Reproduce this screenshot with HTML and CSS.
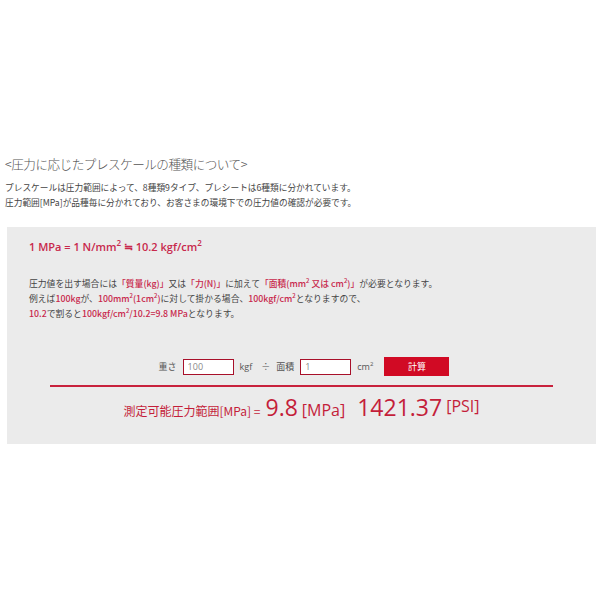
FILE: index.html
```html
<!DOCTYPE html>
<html>
<head>
    <meta charset="utf-8">
    <title>プレスケールの種類について</title>
    <link rel="stylesheet" href="styles.css">
</head>
<body>
    <div class="section">
        <h2 class="title">&lt;圧力に応じたプレスケールの種類について&gt;</h2>
        <p class="lead">プレスケールは圧力範囲によって、8種類9タイプ、プレシートは6種類に分かれています。<br>
        圧力範囲[MPa]が品種毎に分かれており、お客さまの環境下での圧力値の確認が必要です。</p>

        <div class="calc-box">
            <p class="formula">1 MPa = 1 N/mm<sup>2</sup> ≒ 10.2 kgf/cm<sup>2</sup></p>
            <p class="note">
                圧力値を出す場合には<span class="hl">「質量(kg)」</span>又は<span class="hl">「力(N)」</span>に加えて<span class="hl">「面積(mm<sup>2</sup> 又は cm<sup>2</sup>)」</span>が必要となります。<br>
                例えば<span class="hl">100kg</span>が、<span class="hl">100mm<sup>2</sup>(1cm<sup>2</sup>)</span>に対して掛かる場合、<span class="hl">100kgf/cm<sup>2</sup></span>となりますので、<br>
                <span class="hl">10.2</span>で割ると<span class="hl">100kgf/cm<sup>2</sup>/10.2=9.8 MPa</span>となります。
            </p>

            <div class="calc-form">
                <label>重さ</label>
                <input type="text" id="weight" value="100">
                <span class="unit">kgf</span>
                <span class="op">÷</span>
                <label>面積</label>
                <input type="text" id="area" value="1">
                <span class="unit">cm<sup>2</sup></span>
                <button onclick="calc()">計算</button>
            </div>

            <div class="result">
                <span class="result-label">測定可能圧力範囲[MPa] =</span>
                <span class="big" id="mpa">9.8</span>
                <span class="bracket">[MPa]</span>
                <span class="big psi" id="psi">1421.37</span>
                <span class="bracket raised">[PSI]</span>
            </div>
        </div>
    </div>

<script>
    function calc() {
        const w = parseFloat(document.getElementById("weight").value);
        const a = parseFloat(document.getElementById("area").value);
        if (!w || !a) return;
        const mpa = (w / a) / 10.2;
        document.getElementById("mpa").innerText = mpa.toFixed(1);
        document.getElementById("psi").innerText = (mpa * 145.038).toFixed(2);
    }
</script>
</body>
</html>
```

FILE: styles.css
```css
body {
    margin: 0;
    padding: 0;
    background: #fff;
    color: #444;
    font-family: "Noto Sans CJK JP", "Open Sans", sans-serif;
}
.section {
    padding: 154px 4px 0 5px;
}
.title {
    margin: 0;
    font-size: 12.6px;
    font-weight: 300;
    line-height: 19px;
    color: #555;
    letter-spacing: -0.5px;
}
.lead {
    margin: 7px 0 0;
    font-size: 8.7px;
    line-height: 15px;
    color: #444;
}
.calc-box {
    margin: 17px 0 0 2px;
    width: 589px;
    height: 217px;
    box-sizing: border-box;
    background: #ebebeb;
    padding-top: 12px;
}
.formula {
    margin: 0;
    padding-left: 22px;
    font-family: "Open Sans", sans-serif;
    font-size: 11px;
    font-weight: 600;
    line-height: 16px;
    color: #c8284c;
}
.formula sup {
    font-size: 8px;
    line-height: 0;
}
.note {
    margin: 21px 0 0;
    padding-left: 22px;
    font-size: 8.8px;
    line-height: 15px;
    color: #444;
}
.hl {
    color: #c8284c;
    font-weight: 500;
}
sup {
    font-size: 6px;
    line-height: 0;
}
.calc-form {
    display: flex;
    justify-content: center;
    align-items: center;
    margin-top: 36px;
    font-size: 9px;
    color: #555;
    padding-left: 5px;
}
.calc-form label {
    margin-right: 6px;
}
.calc-form input {
    width: 51px;
    height: 16px;
    box-sizing: border-box;
    border: 1px solid #a8102a;
    padding: 0 4px;
    font-family: "Open Sans", sans-serif;
    font-size: 9px;
    color: #888;
    background: #fff;
}
.unit {
    margin-left: 6px;
    font-family: "Open Sans", sans-serif;
}
.op {
    margin: 0 6px 0 9px;
}
.calc-form button {
    margin-left: 11px;
    width: 65px;
    height: 19px;
    border: none;
    background: #d10a24;
    color: #fff;
    font-family: "Noto Sans CJK JP", sans-serif;
    font-size: 9px;
    cursor: pointer;
}
.result {
    margin: 9px auto 0;
    width: 503px;
    border-top: 2px solid #c8213c;
    display: flex;
    justify-content: center;
    align-items: baseline;
    color: #c41e3a;
    padding-top: 4px;
}
.result-label {
    font-size: 12px;
}
.big {
    font-family: "Open Sans", sans-serif;
    font-size: 23px;
    margin-left: 5px;
}
.bracket {
    font-family: "Open Sans", sans-serif;
    font-size: 16px;
    margin-left: 4px;
}
.big.psi {
    margin-left: 12px;
}
.raised {
    position: relative;
    top: -4px;
}
```
